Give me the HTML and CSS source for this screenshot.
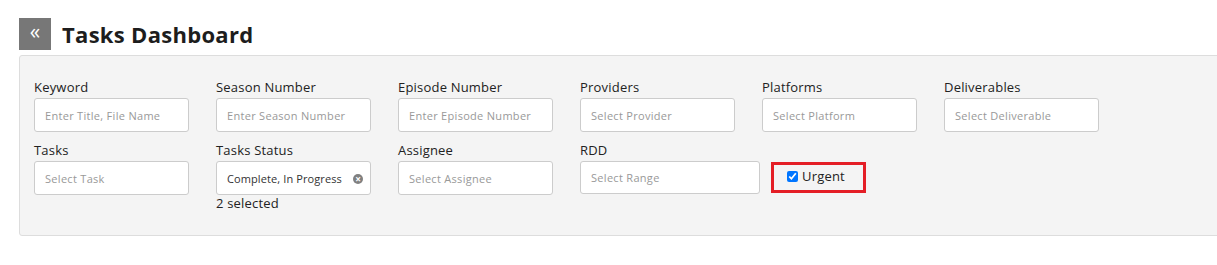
FILE: index.html
```html
<!DOCTYPE html>
<html lang="en">

<head>
    <meta charset="UTF-8">
    <title>Tasks Dashboard</title>
    <link rel="stylesheet" href="styles.css">
</head>

<body>

<div class="page-header">
    <a href="#" class="collapse-btn">&laquo;</a>
    <h1>Tasks Dashboard</h1>
</div>

<div class="filter-panel">
    <div class="filter-grid">
        <div class="filter-group">
            <label>Keyword</label>
            <div class="field"><span class="placeholder">Enter Title, File Name</span></div>
        </div>
        <div class="filter-group">
            <label>Season Number</label>
            <div class="field"><span class="placeholder">Enter Season Number</span></div>
        </div>
        <div class="filter-group">
            <label>Episode Number</label>
            <div class="field"><span class="placeholder">Enter Episode Number</span></div>
        </div>
        <div class="filter-group">
            <label>Providers</label>
            <div class="field"><span class="placeholder">Select Provider</span></div>
        </div>
        <div class="filter-group">
            <label>Platforms</label>
            <div class="field"><span class="placeholder">Select Platform</span></div>
        </div>
        <div class="filter-group">
            <label>Deliverables</label>
            <div class="field"><span class="placeholder">Select Deliverable</span></div>
        </div>

        <div class="filter-group">
            <label>Tasks</label>
            <div class="field"><span class="placeholder">Select Task</span></div>
        </div>
        <div class="filter-group">
            <label>Tasks Status</label>
            <div class="field">
                <span class="value">Complete, In Progress</span>
                <span class="clear-btn">&times;</span>
            </div>
            <div class="selected-count">2 selected</div>
        </div>
        <div class="filter-group">
            <label>Assignee</label>
            <div class="field"><span class="placeholder">Select Assignee</span></div>
        </div>
        <div class="filter-group">
            <label>RDD</label>
            <div class="field field-wide"><span class="placeholder">Select Range</span></div>
        </div>
        <div class="filter-group urgent-group">
            <label class="urgent-box">
                <input type="checkbox" checked>
                <span>Urgent</span>
            </label>
        </div>
    </div>
</div>

</body>

</html>
```

FILE: styles.css
```css
* {
    box-sizing: border-box;
    font-family: 'Open Sans', 'Liberation Sans', sans-serif;
}

body {
    margin: 0;
    padding: 0;
    background-color: #ffffff;
    color: #222;
    overflow: hidden;
}

/* CABECERA */
.page-header {
    display: flex;
    align-items: center;
    gap: 11px;
    padding: 18px 0 0 19px;
}

.collapse-btn {
    width: 32px;
    height: 32px;
    background-color: #777;
    color: #fff;
    text-decoration: none;
    font-size: 21px;
    line-height: 27px;
    text-align: center;
}

h1 {
    margin: 0;
    font-size: 22px;
    line-height: 28px;
    font-weight: 700;
    letter-spacing: 0.3px;
    color: #1d1d1d;
}

/* PANEL DE FILTROS */
.filter-panel {
    margin: 5px -20px 0 19px;
    height: 181px;
    background-color: #f4f4f4;
    border: 1px solid #ddd;
    border-radius: 3px;
    padding: 22px 0 0 14px;
}

.filter-grid {
    display: grid;
    grid-template-columns: repeat(6, 155px);
    column-gap: 27px;
    row-gap: 9px;
    align-items: start;
}

.filter-group label {
    display: block;
    font-size: 13px;
    line-height: 18px;
    margin-bottom: 2px;
    letter-spacing: 0.2px;
    color: #222;
}

.field {
    position: relative;
    height: 34px;
    background-color: #fff;
    border: 1px solid #ccc;
    border-radius: 3px;
    padding: 0 10px;
    display: flex;
    align-items: center;
    font-size: 11px;
    letter-spacing: 0.3px;
}

.field-wide {
    width: 180px;
    height: 33px;
}

.placeholder {
    color: #999;
}

.value {
    color: #333;
    letter-spacing: 0.1px;
}

.clear-btn {
    position: absolute;
    right: 7px;
    top: 12px;
    width: 10px;
    height: 10px;
    border-radius: 50%;
    background-color: #808080;
    color: #fff;
    font-size: 10px;
    font-weight: bold;
    line-height: 10px;
    text-align: center;
    letter-spacing: 0;
}

.selected-count {
    font-size: 13px;
    line-height: 16px;
    margin-top: 0;
    letter-spacing: 0.2px;
    color: #222;
}

/* URGENTE */
.urgent-group {
    padding-top: 21px;
    padding-left: 9px;
}

.filter-group .urgent-box {
    display: flex;
    align-items: center;
    gap: 4px;
    width: 95px;
    height: 31px;
    margin-bottom: 0;
    border: 3px solid #e41e26;
    padding: 0 0 3px 13px;
    font-size: 13px;
}

.urgent-box input {
    margin: 0;
    width: 11px;
    height: 11px;
}
```
